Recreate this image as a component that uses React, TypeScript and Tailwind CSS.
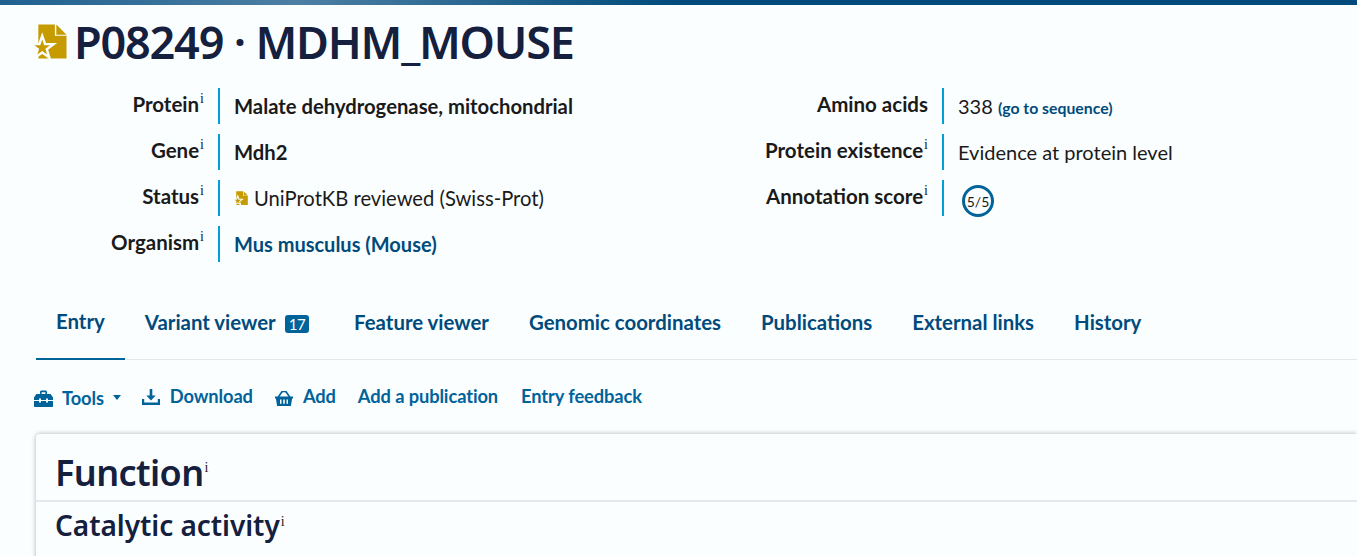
import React from 'react';

const heading = { fontFamily: '"Noto Sans", sans-serif' };

const InfoMark = ({ className = '-top-[9px]' }: { className?: string }) => (
    <sup className={`font-['Liberation_Serif',serif] font-normal text-[14px] tracking-normal leading-none text-[#1a1a1a] ml-px ${className}`}>i</sup>
);

const EntryIcon = ({ size }: { size: number }) => (
    <svg width={size} viewBox="-1 0 35 36" className="shrink-0">
        <path d="M4.5.5h17V12h12v23.5h-29z" fill="#c69b00" />
        <path d="M23 .5L33.5 11H23z" fill="#c69b00" />
        <path
            d="M8.5 16l2 5.75 6.1.15-4.9 3.65 1.8 5.85-5-3.5-5 3.5 1.8-5.85L.4 21.9l6.1-.15z"
            fill="#c69b00"
            stroke="#fbfeff"
            strokeWidth="5"
            paintOrder="stroke"
        />
    </svg>
);

const ToolboxIcon = () => (
    <svg width="19" height="17" viewBox="0 0 19 17" fill="#00639a" className="shrink-0 mt-[2px]">
        <path d="M6 4V2.2C6 1.3 6.7.6 7.6.6h3.8c.9 0 1.6.7 1.6 1.6V4h-1.6V2.2H7.6V4z" />
        <path d="M2.4 4h14.2L19 7.4V10h-5V8.6h-2V10H7V8.6H5V10H0V7.4z" />
        <path d="M0 11h5v1.4h2V11h5v1.4h2V11h5v5c0 .6-.4 1-1 1H1c-.6 0-1-.4-1-1z" />
    </svg>
);

const DownloadIcon = () => (
    <svg width="18" height="16" viewBox="0 0 18 16" fill="#00639a" className="shrink-0">
        <path d="M7.7 0h2.6v6.5h3.4L9 11.4 4.3 6.5h3.4z" />
        <path d="M0 10h2.2v3.6h13.6V10H18v6H0z" />
    </svg>
);

const BasketIcon = () => (
    <svg width="18" height="15" viewBox="0 0 18 15" fill="#00639a" className="shrink-0 mt-[2px]">
        <path d="M3 6.5L6.6 1.2C7 .6 7.6.4 8.2.4h1.6c.6 0 1.2.2 1.6.8L15 6.5" fill="none" stroke="#00639a" strokeWidth="1.6" />
        <path
            fillRule="evenodd"
            d="M0 5.4h18v2.2h-.9L15.9 15H2.1L.9 7.6H0zM5 8.4v4.4h1.5V8.4zm3.2 0v4.4h1.6V8.4zm3.3 0v4.4H13V8.4z"
        />
    </svg>
);

const MetaRow = ({ label, info = true, children }: { label: string; info?: boolean; children: React.ReactNode }) => (
    <div className="flex h-[36px] mb-[10px]">
        <div className="w-[220px] text-right font-bold text-[20.5px] leading-[32px] text-[#1a1a1a] pr-[14px] border-r-2 border-[#00a0d6]">
            {label}
            {info && <InfoMark />}
        </div>
        {children}
    </div>
);

const tabs = ['Entry', 'Variant viewer', 'Feature viewer', 'Genomic coordinates', 'Publications', 'External links', 'History'];

export default function App() {
    return (
        <div className="h-[556px] overflow-hidden bg-[#fbfeff] font-['Lato',sans-serif] text-[#1a1a1a]">
            <div className="h-[5px] bg-[linear-gradient(90deg,#1f6190_0%,#4d7fa3_22%,#004b7c_50%,#004b7c_100%)]" />

            <div className="flex items-center pl-[33px] pt-px h-[72px]">
                <EntryIcon size={34} />
                <h1 style={heading} className="ml-[7px] text-[45px] leading-[50px] font-semibold text-[#14203e] tracking-[-1.2px]">
                    P08249 · MDHM_MOUSE
                </h1>
            </div>

            <div className="flex pt-[11px] h-[222px]">
                <div className="w-[724px]">
                    <MetaRow label="Protein">
                        <div className="pl-[14px] font-bold text-[20.25px] leading-[36px]">Malate dehydrogenase, mitochondrial</div>
                    </MetaRow>
                    <MetaRow label="Gene">
                        <div className="pl-[14px] font-bold text-[20.25px] leading-[36px]">Mdh2</div>
                    </MetaRow>
                    <MetaRow label="Status">
                        <div className="pl-[14px] flex items-center gap-[6px] text-[20.2px] leading-[38px]">
                            <EntryIcon size={14} />
                            UniProtKB reviewed (Swiss-Prot)
                        </div>
                    </MetaRow>
                    <MetaRow label="Organism">
                        <div className="pl-[14px] font-bold text-[20px] leading-[36px] text-[#004b7c]">Mus musculus (Mouse)</div>
                    </MetaRow>
                </div>
                <div>
                    <MetaRow label="Amino acids" info={false}>
                        <div className="pl-[14px] text-[20px] leading-[36px]">
                            338 <span className="font-bold text-[15.8px] text-[#004b7c]">(go to sequence)</span>
                        </div>
                    </MetaRow>
                    <MetaRow label="Protein existence">
                        <div className="pl-[14px] text-[20px] leading-[36px]">Evidence at protein level</div>
                    </MetaRow>
                    <MetaRow label="Annotation score">
                        <div className="pl-[18px] pt-[5px]">
                            <div className="w-[32px] h-[32px] rounded-full border-[3px] border-[#00639a] flex items-center justify-center text-[14px]">5/5</div>
                        </div>
                    </MetaRow>
                </div>
            </div>

            <div className="flex ml-[36px] h-[61px] border-b border-[#e4e8ec] text-[20.4px] font-bold text-[#004b7c]">
                {tabs.map((tab, i) => (
                    <div key={tab} className={`flex items-center h-[61px] px-[20px] pb-[14px] ${i === 0 ? 'border-b-2 border-[#00639a]' : ''}`}>
                        {tab}
                        {tab === 'Variant viewer' && (
                            <span className="ml-[9px] mr-[5px] mt-[2px] bg-[#00639a] text-[#fbfeff] text-[15px] font-normal leading-[18px] px-[4px] rounded-[3px] tracking-[-0.5px]">17</span>
                        )}
                    </div>
                ))}
            </div>

            <div className="flex items-center ml-[34px] h-[74px] text-[18.3px] font-bold text-[#00639a] tracking-[-0.1px]">
                <ToolboxIcon />
                <span className="ml-[9px] mt-[3px]">Tools</span>
                <span className="ml-[9px] w-0 h-0 border-x-[4px] border-x-transparent border-t-[5px] border-t-[#00639a]" />
                <span className="ml-[21px]"><DownloadIcon /></span>
                <span className="ml-[10px]">Download</span>
                <span className="ml-[22px]"><BasketIcon /></span>
                <span className="ml-[10px]">Add</span>
                <span className="ml-[22px]">Add a publication</span>
                <span className="ml-[23px]">Entry feedback</span>
            </div>

            <div className="ml-[36px] rounded-tl-[4px] bg-[#fbfeff] shadow-[0_0_5px_rgba(0,0,0,0.3)] h-[200px]">
                <div style={heading} className="h-[68px] pl-[19px] pt-[15px] border-b-2 border-[#e4e8ec] text-[36px] leading-[48px] font-semibold text-[#14203e] tracking-[-0.6px]">
                    Function<InfoMark className="-top-[14px]" />
                </div>
                <div style={heading} className="pl-[19px] pt-[3px] text-[28px] leading-[40px] font-semibold text-[#14203e] tracking-[-0.05px]">
                    Catalytic activity<InfoMark className="-top-[10px]" />
                </div>
            </div>
        </div>
    );
}
